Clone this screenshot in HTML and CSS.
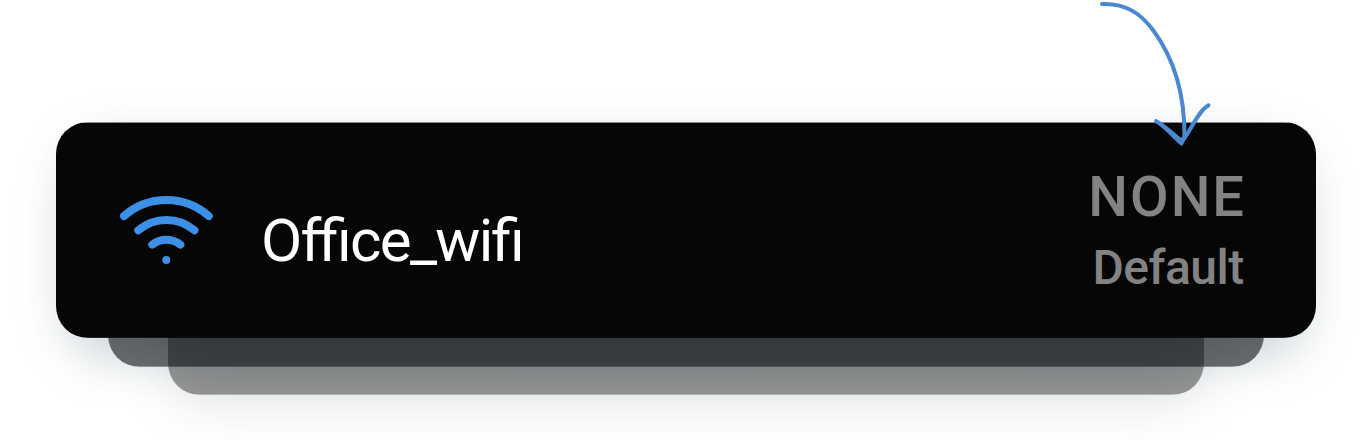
FILE: index.html
```html
<!DOCTYPE html>
<html lang="en">
<head>
<meta charset="utf-8">
<title>Wi-Fi network</title>
<link rel="stylesheet" href="styles.css">
</head>
<body>
<main class="stage">
  <div class="stack">
    <div class="layer layer-back"></div>
    <div class="layer layer-middle"></div>
    <section class="card">
      <svg class="wifi" viewBox="0 0 94 70" aria-hidden="true">
        <path d="M4 21A64 64 0 0 1 88.700 21"/>
        <path d="M18.300 35.300A43 43 0 0 1 74.400 35.300"/>
        <path d="M32.300 49.600A23 23 0 0 1 60.400 49.600"/>
        <circle cx="46.300" cy="65" r="4"/>
      </svg>
      <span class="network">Office_wifi</span>
      <div class="status">
        <span class="security">NONE</span>
        <span class="mode">Default</span>
      </div>
    </section>
  </div>
  <svg class="arrow" viewBox="0 0 150 160" aria-hidden="true">
    <path d="M22 4C46 3 61 14 73 30C96 61 105 98 104.500 138"/>
    <path d="M103 140C111 131 117 112 128.500 105.300"/>
    <path class="barb" d="M76 121C86 127 93 134 101 140.500L104 138L101.500 143.500C92 135 86 127 76 121Z"/>
  </svg>
</main>
</body>
</html>
```
FILE: styles.css
```css
body {
  margin: 0;
  background: #fff;
  font-family: Roboto, sans-serif;
}
.stage {
  position: relative;
  box-sizing: border-box;
  width: 1372px;
  height: 440px;
  padding: 122px 56px 0;
  overflow: hidden;
}
.stack {
  position: relative;
  border-radius: 32px;
}
.card {
  position: relative;
  box-sizing: border-box;
  display: flex;
  align-items: flex-start;
  height: 216px;
  padding: 0 72px 0 64px;
  border-radius: 32px;
  background: linear-gradient(rgba(6, 6, 6, 0.45) 1px, #060606 1px, #060606 215px, rgba(6, 6, 6, 0.85) 215px);
}
.stack::before,
.stack::after {
  content: "";
  position: absolute;
  z-index: -1;
  filter: blur(24px);
}
.stack::before {
  inset: 20px 10px -20px;
  border-radius: 48px;
  background: rgba(30, 65, 80, 0.24);
}
.stack::after {
  inset: 140px 112px -68px;
  border-radius: 40px;
  background: rgba(45, 55, 75, 0.12);
}
.layer {
  position: absolute;
  height: 100px;
  border-radius: 32px;
}
.layer-middle {
  left: 52px;
  right: 52px;
  bottom: -29px;
  background: linear-gradient(rgba(6, 10, 12, 0.58) 99px, rgba(6, 10, 12, 0.4) 99px);
}
.layer-back {
  left: 112px;
  right: 112px;
  bottom: -57px;
  background: linear-gradient(rgba(6, 6, 6, 0.4) 99px, rgba(6, 6, 6, 0.25) 99px);
}
.wifi {
  flex: none;
  width: 94px;
  height: 70px;
  margin-top: 73px;
  fill: none;
  stroke: #3b90e8;
  stroke-width: 8;
  stroke-linecap: round;
}
.wifi circle {
  fill: #3b90e8;
  stroke: none;
}
.network {
  margin: 84px 0 0 47px;
  font-size: 60px;
  line-height: 69px;
  letter-spacing: -1.700px;
  font-feature-settings: "liga" 1;
  color: #fff;
}
.status {
  display: flex;
  flex-direction: column;
  align-items: flex-end;
  margin: 42px 0 0 auto;
  font-weight: 500;
  color: #838383;
}
.security {
  margin-right: -2px;
  font-size: 56px;
  line-height: 66px;
  letter-spacing: 2px;
}
.mode {
  margin: 10px 0.300px 0 0;
  font-size: 48px;
  line-height: 56px;
  letter-spacing: -0.500px;
}
.arrow {
  position: absolute;
  left: 1080px;
  top: 0;
  width: 150px;
  height: 160px;
  fill: none;
  stroke: #4a88d3;
  stroke-width: 4;
  stroke-linecap: round;
  stroke-linejoin: round;
}
.arrow .barb {
  fill: #4a88d3;
}
```
